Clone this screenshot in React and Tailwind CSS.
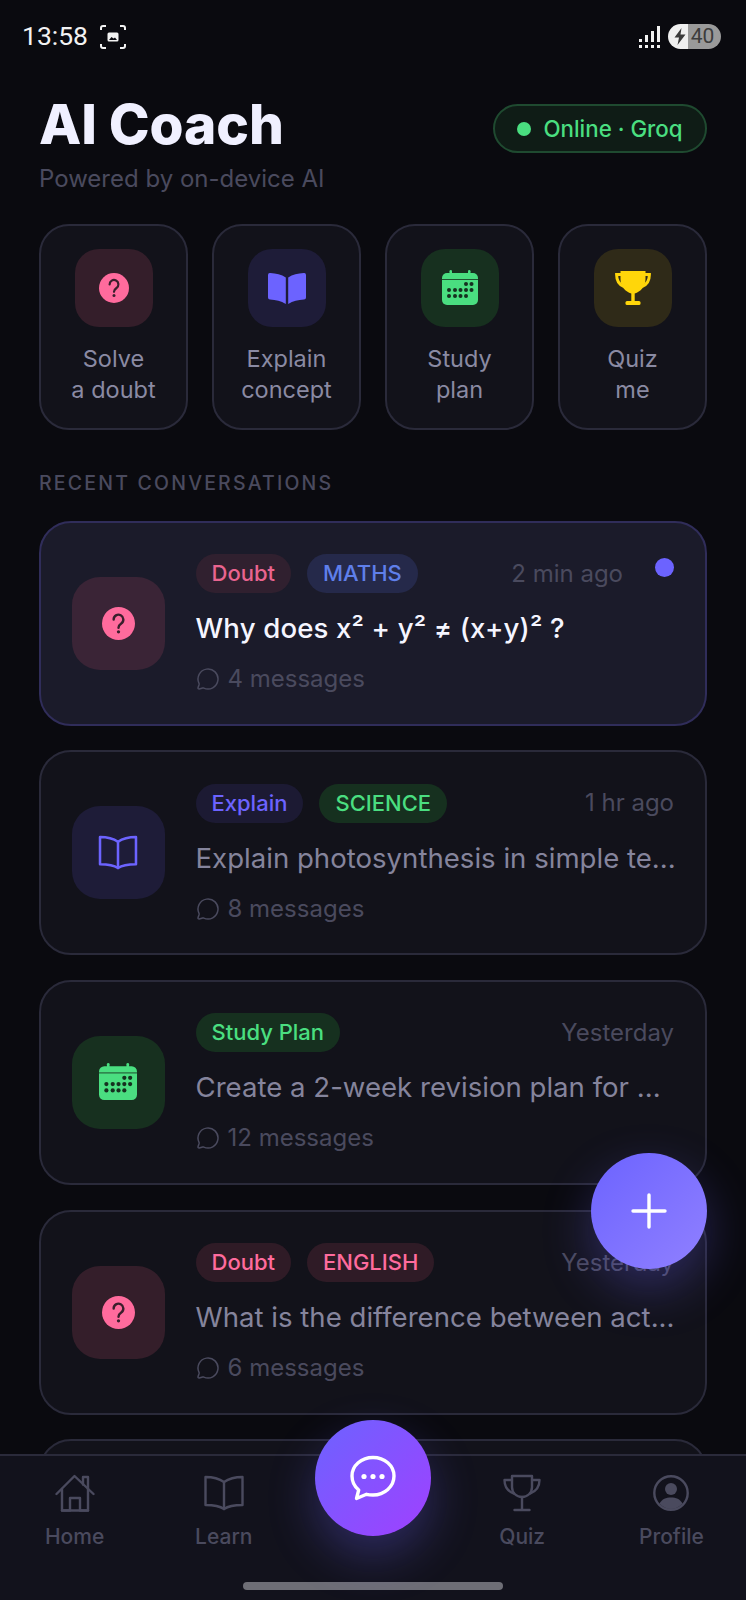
import React from "react";
import { MessageCircle } from "lucide-react";

const PINK = "#ff6b9d";
const VIOLET = "#6c63ff";
const GREEN = "#4ade80";
const GOLD = "#ffd60a";

function HelpIcon({ size = 30 }) {
  return (
    <svg width={size} height={size} viewBox="0 0 30 30" aria-hidden>
      <circle cx="15" cy="15" r="15" fill={PINK} />
      <path d="M10.6 11.4a4.4 4.4 0 1 1 6.9 3.6c-1.6 1.1-2.5 1.9-2.5 3.8" fill="none" stroke="#3a1f2c" strokeWidth="2.2" strokeLinecap="round" />
      <circle cx="15" cy="22.6" r="1.5" fill="#3a1f2c" />
    </svg>
  );
}

function BookSolid() {
  return (
    <svg width="38" height="32" viewBox="0 0 38 32" fill={VIOLET} aria-hidden>
      <path d="M0 3a2 2 0 0 1 2.3-2C8 1.500 13.500 2.500 17.800 5.500V32C13 28.800 8 27.800 2 27.500A2 2 0 0 1 0 25.500Z" />
      <path d="M38 3a2 2 0 0 0-2.300-2C30 1.500 24.500 2.500 20.200 5.500V32C25 28.800 30 27.800 36 27.500A2 2 0 0 0 38 25.500Z" />
    </svg>
  );
}

function BookOutline({ color, width = 40, height = 36, stroke = 2.4 }) {
  return (
    <svg width={width} height={height} viewBox="0 0 40 36" fill="none" stroke={color} strokeWidth={stroke} strokeLinejoin="round" strokeLinecap="round" aria-hidden>
      <path d="M20 7C15 3.500 8 2 1.500 2V30C8 30 15 30.500 20 34C25 30.500 32 30 38.500 30V2C32 2 25 3.500 20 7Z" />
      <path d="M20 7V34" />
    </svg>
  );
}

function CalendarIcon({ size = 36 }) {
  const dots = [
    [24, 14], [29.500, 14],
    [7, 20], [13, 20], [18.500, 20], [24, 20], [29.500, 20],
    [7, 26], [13, 26], [18.500, 26], [24, 26],
  ];
  return (
    <svg width={size} height={size} viewBox="0 0 36 36" aria-hidden>
      <rect x="7.500" y="0" width="2.500" height="5" rx="1.250" fill={GREEN} />
      <rect x="26" y="0" width="2.500" height="5" rx="1.250" fill={GREEN} />
      <path d="M0 8a5 5 0 0 1 5-5h26a5 5 0 0 1 5 5v22a5 5 0 0 1-5 5H5a5 5 0 0 1-5-5Z" fill={GREEN} />
      <rect x="0" y="9" width="36" height="0.800" fill="#16301f" />
      {dots.map(([x, y]) => (
        <circle key={`${x}-${y}`} cx={x} cy={y} r="2" fill="#16301f" />
      ))}
    </svg>
  );
}

function TrophySolid() {
  return (
    <svg width="36" height="36" viewBox="0 0 36 36" aria-hidden>
      <path d="M5.500 1h25v8c0 8-5 12.500-10.800 14.500v8h-3.400v-8C10.500 21.500 5.500 17 5.500 9Z" fill={GOLD} />
      <path d="M6 4.500H1.600c0 5.500 1.800 10 7.400 12M30 4.500h4.400c0 5.500-1.800 10-7.400 12" fill="none" stroke={GOLD} strokeWidth="3" />
      <rect x="10.500" y="31" width="15" height="4" rx="1.500" fill={GOLD} />
    </svg>
  );
}

function HomeIcon({ color }) {
  return (
    <svg width="40" height="38" viewBox="0 0 40 38" fill="none" stroke={color} strokeWidth="2.400" strokeLinejoin="round" strokeLinecap="round" aria-hidden>
      <path d="M1.500 20L19.500 2L38.500 20" />
      <path d="M28 10.500V3h5v12" />
      <path d="M7 15V36.500H15V24H25V36.500H33V15" />
      <path d="M7 36.500H33" />
    </svg>
  );
}

function TrophyOutline({ color }) {
  return (
    <svg width="38" height="38" viewBox="0 0 38 38" fill="none" stroke={color} strokeWidth="2.400" strokeLinejoin="round" strokeLinecap="round" aria-hidden>
      <path d="M9 2h20v11c0 6-4.500 10-10 10S9 19 9 13Z" />
      <path d="M9 6H1.500c0 6.500 2.500 11 9.500 13.500M29 6h7.500c0 6.500-2.500 11-9.500 13.500" />
      <path d="M19 23V36M11.500 36h15" />
    </svg>
  );
}

function ProfileIcon({ color }) {
  return (
    <svg width="36" height="36" viewBox="0 0 36 36" aria-hidden>
      <circle cx="18" cy="18" r="16.700" fill="none" stroke={color} strokeWidth="2.400" />
      <circle cx="18" cy="14" r="6" fill={color} />
      <path d="M6.500 28.500C9 24 13 22.500 18 22.500s9 1.500 11.500 6C26.500 32 22.500 34 18 34s-8.500-2-11.500-5.500Z" fill={color} />
    </svg>
  );
}

function StatusBar() {
  return (
    <div className="flex h-[72px] items-center justify-between pl-[22px] pr-[25px] pt-[1px]">
      <div className="flex items-center gap-[12px]">
        <span className="text-[26.500px] leading-none text-[#f2f2f2] font-['Roboto',sans-serif]">13:58</span>
        <svg width="26" height="24" viewBox="0 0 26 24" fill="none" stroke="#f2f2f2" strokeWidth="2" aria-hidden>
          <path d="M1 5V3a2 2 0 0 1 2-2h3M20 1h3a2 2 0 0 1 2 2v2M25 19v2a2 2 0 0 1-2 2h-3M6 23H3a2 2 0 0 1-2-2v-2" />
          <rect x="7.500" y="7.500" width="11" height="9" rx="1.500" fill="#f2f2f2" stroke="none" />
          <path d="M9 15l2.500-3 2 1.500 1.500-1 2 2.500Z" fill="#0a0a0f" stroke="none" />
        </svg>
      </div>
      <div className="flex items-center gap-[8px]">
        <svg width="21" height="22" viewBox="0 0 21 22" fill="#f2f2f2" aria-hidden>
          <rect x="0" y="13" width="3" height="3" />
          <rect x="0" y="19" width="3" height="3" />
          <rect x="6" y="9" width="3" height="7" />
          <rect x="6" y="19" width="3" height="3" />
          <rect x="12" y="5" width="3" height="11" />
          <rect x="12" y="19" width="3" height="3" />
          <rect x="18" y="0" width="3" height="16" />
          <rect x="18" y="19" width="3" height="3" />
        </svg>
        <div className="flex h-[25px] w-[53px] overflow-hidden rounded-full">
          <div className="flex w-[20px] items-center justify-center bg-[#efefef] pl-[3px]">
            <svg width="12" height="17" viewBox="0 0 12 17" fill="#3a3a3a" aria-hidden>
              <path d="M7.500 0L0.500 9.500H5L3.500 17L11.500 6.500H6.500Z" />
            </svg>
          </div>
          <div className="flex flex-1 items-center justify-center bg-[#9a9a9a] pr-[4px] text-[21px] leading-none text-[#3c3c3c] font-['Roboto',sans-serif]">
            40
          </div>
        </div>
      </div>
    </div>
  );
}

const actions = [
  { id: "doubt", lines: ["Solve", "a doubt"], tile: "bg-[#341e2a]", icon: <HelpIcon /> },
  { id: "concept", lines: ["Explain", "concept"], tile: "bg-[#1e1c38]", icon: <BookSolid /> },
  { id: "plan", lines: ["Study", "plan"], tile: "bg-[#17301f]", icon: <CalendarIcon /> },
  { id: "quiz", lines: ["Quiz", "me"], tile: "bg-[#2f2a18]", icon: <TrophySolid /> },
];

function QuickAction({ action }) {
  return (
    <div className="flex h-[206px] flex-col items-center rounded-[30px] border-2 border-[#2a2a3a] bg-[#12121a] pt-[23px]">
      <div className={`flex h-[78px] w-[78px] items-center justify-center rounded-[24px] ${action.tile}`}>
        {action.icon}
      </div>
      <div className="mt-[16px] text-center text-[23.500px] leading-[31px] text-[#8a8aa3]">
        {action.lines.map((l) => (
          <div key={l}>{l}</div>
        ))}
      </div>
    </div>
  );
}

const chats = [
  {
    id: 1,
    active: true,
    tile: "bg-[#3a2436]",
    icon: <HelpIcon size={33} />,
    pills: [
      { text: "Doubt", cls: "bg-[#30202f] text-[#e9648f]" },
      { text: "MATHS", cls: "bg-[#25294a] text-[#5f7fea]" },
    ],
    time: "2 min ago",
    title: "Why does x² + y² ≠ (x+y)² ?",
    count: "4 messages",
  },
  {
    id: 2,
    tile: "bg-[#1e1c38]",
    icon: <BookOutline color={VIOLET} width={40} height={35} stroke={2.6} />,
    pills: [
      { text: "Explain", cls: "bg-[#1c1a33] text-[#6c63ff]" },
      { text: "SCIENCE", cls: "bg-[#16301f] text-[#4ade80]" },
    ],
    time: "1 hr ago",
    title: "Explain photosynthesis in simple te...",
    count: "8 messages",
  },
  {
    id: 3,
    tile: "bg-[#17301f]",
    icon: <CalendarIcon size={38} />,
    pills: [{ text: "Study Plan", cls: "bg-[#16301f] text-[#4ade80]" }],
    time: "Yesterday",
    title: "Create a 2-week revision plan for ...",
    count: "12 messages",
  },
  {
    id: 4,
    tile: "bg-[#341e2a]",
    icon: <HelpIcon size={33} />,
    pills: [
      { text: "Doubt", cls: "bg-[#2f1b26] text-[#ff6b9d]" },
      { text: "ENGLISH", cls: "bg-[#2f1b26] text-[#ff6b9d]" },
    ],
    time: "Yesterday",
    title: "What is the difference between act...",
    count: "6 messages",
  },
];

function ChatCard({ chat }) {
  return (
    <div className={`relative flex h-[205px] shrink-0 items-center gap-[31px] rounded-[32px] border-2 pl-[30.500px] ${chat.active ? "border-[#302d5a] bg-[#1b1b2a]" : "border-[#2a2a3a] bg-[#12121a]"}`}>
      <div className={`flex h-[93px] w-[93px] shrink-0 items-center justify-center rounded-[28px] ${chat.tile}`}>
        {chat.icon}
      </div>
      <div className="min-w-0 flex-1 pr-[31px] pt-[2px]">
        <div className="flex items-center">
          <div className="flex gap-[16px]">
            {chat.pills.map((p) => (
              <span key={p.text} className={`flex h-[39px] items-center rounded-full px-[16px] text-[22px] font-medium ${p.cls}`}>
                {p.text}
              </span>
            ))}
          </div>
          <span className={`ml-auto text-[24px] text-[#4a4a5e] ${chat.active ? "mr-[51px]" : ""}`}>{chat.time}</span>
        </div>
        <div className={`mt-[17px] whitespace-nowrap text-[27.600px] leading-[36px] ${chat.active ? "font-medium tracking-[0.15px] text-[#f5f5ff]" : "text-[#85849c]"}`}>
          {chat.title}
        </div>
        <div className="mt-[18px] flex items-center gap-[8px] text-[24px] leading-[30px] text-[#4a4a5e]">
          <MessageCircle size={24} strokeWidth={1.5} />
          <span>{chat.count}</span>
        </div>
      </div>
      {chat.active && <span className="absolute right-[31px] top-[35px] h-[19px] w-[19px] rounded-full bg-[#6c63ff]" />}
    </div>
  );
}

const navItems = [
  { label: "Home", icon: <HomeIcon color="#4a4a5e" /> },
  { label: "Learn", icon: <BookOutline color="#4a4a5e" /> },
  null,
  { label: "Quiz", icon: <TrophyOutline color="#4a4a5e" /> },
  { label: "Profile", icon: <ProfileIcon color="#4a4a5e" /> },
];

function BottomNav() {
  return (
    <div className="relative z-10 h-[146px] shrink-0 border-t-2 border-[#2a2a3a] bg-[#12121c]">
      <div className="grid grid-cols-5 pt-[18px]">
        {navItems.map((item, i) =>
          item ? (
            <div key={item.label} className="flex flex-col items-center">
              <div className="flex h-[38px] items-center">{item.icon}</div>
              <span className="mt-[10px] text-[21px] font-medium leading-[30px] text-[#4a4a5e]">{item.label}</span>
            </div>
          ) : (
            <div key={i} />
          )
        )}
      </div>
      <div className="mx-auto mt-[30px] h-[8px] w-[260px] rounded-full bg-[#6e6e76]" />
      {/* chat button sits over the top edge of the bar */}
      <div className="absolute left-[315px] top-[-36px] flex h-[116px] w-[116px] items-center justify-center rounded-full bg-[linear-gradient(135deg,#6c63ff,#a040ff)] shadow-[0_20px_48px_rgba(108,99,255,0.3)]">
        <svg width="46" height="46" viewBox="0 0 46 46" fill="none" aria-hidden>
          <path d="M23 2.500C11.500 2.500 2 10.500 2 21c0 5.500 2.500 10.500 6.700 14L6.500 43.500l10-4.200c2 .5 4.300.7 6.500.7 11.500 0 21-8.500 21-19S34.500 2.500 23 2.500Z" stroke="#fff" strokeWidth="3.400" strokeLinejoin="round" />
          <circle cx="14" cy="21.500" r="2.600" fill="#fff" />
          <circle cx="23" cy="21.500" r="2.600" fill="#fff" />
          <circle cx="32" cy="21.500" r="2.600" fill="#fff" />
        </svg>
      </div>
    </div>
  );
}

export default function App() {
  return (
    <div className="relative flex h-[1600px] w-[746px] flex-col overflow-hidden bg-[#0a0a0f] font-['Inter',sans-serif]">
      <StatusBar />
      <div className="min-h-0 flex-1 overflow-hidden px-[39px]">
        <div className="flex items-start justify-between pt-[21px]">
          <div>
            <h1 className="text-[55px] font-extrabold leading-[62px] tracking-[-0.1px] text-[#f0f0ff]">AI Coach</h1>
            <p className="mt-[9px] text-[24px] leading-[30px] text-[#4a4a5e]">Powered by on-device AI</p>
          </div>
          <div className="mt-[11px] flex h-[49px] w-[214px] items-center justify-center gap-[12px] rounded-full border-2 border-[#1f4a30] bg-[#0f1c16] text-[22.300px] font-medium text-[#4ade80]">
            <span className="h-[14px] w-[14px] rounded-full bg-[#4ade80]" />
            Online · Groq
          </div>
        </div>

        <div className="mt-[30px] grid grid-cols-4 gap-[24px]">
          {actions.map((a) => (
            <QuickAction key={a.id} action={a} />
          ))}
        </div>

        <div className="mt-[40px] text-[19.500px] font-medium leading-[26px] tracking-[2.200px] text-[#4a4a5e]">RECENT CONVERSATIONS</div>

        <div className="mt-[24.500px] flex flex-col gap-[24.700px]">
          {chats.map((c) => (
            <ChatCard key={c.id} chat={c} />
          ))}
          <div className="h-[205px] shrink-0 rounded-[32px] border-2 border-[#2a2a3a] bg-[#12121a]" />
        </div>
      </div>
      <BottomNav />

      <div className="absolute left-[591px] top-[1153px] z-20 flex h-[116px] w-[116px] items-center justify-center rounded-full bg-[linear-gradient(135deg,#6c63ff,#9080ff)] shadow-[0_20px_50px_rgba(108,99,255,0.3)]">
        <svg width="36" height="36" viewBox="0 0 36 36" stroke="#fff" strokeWidth="3.400" strokeLinecap="round" aria-hidden>
          <path d="M18 2V34M2 18H34" />
        </svg>
      </div>
    </div>
  );
}
